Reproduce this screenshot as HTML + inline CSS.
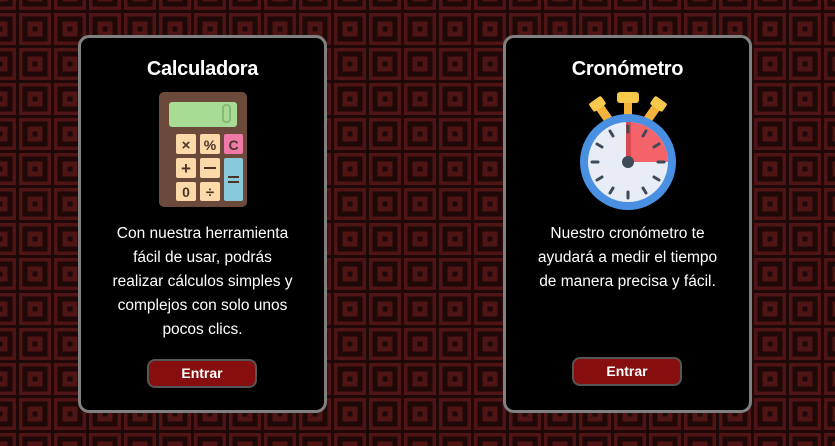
<!DOCTYPE html>
<html><head><meta charset="utf-8"><style>
html,body{margin:0;width:835px;height:446px;overflow:hidden;font-family:"Liberation Sans",sans-serif;}
#bg{position:absolute;left:0;top:0}
.card{position:absolute;top:35px;width:243px;height:372px;background:#000;border:3px solid #808080;border-radius:11px;color:#fff;text-align:center}
.card h2{margin:0;position:absolute;top:20px;left:0;right:0;font-size:20px;font-weight:bold;letter-spacing:-0.3px}
.card p{position:absolute;left:0;right:0;margin:0;font-size:15.5px;line-height:24px;padding:0 30px}
.btn{position:absolute;width:106px;height:25px;background:#860e0e;border:2px solid #555;border-radius:8px;font-weight:bold;font-size:14px;line-height:25px;color:#fff}
svg.i{position:absolute}
</style></head><body>
<svg id="bg" width="835" height="446"><defs><pattern id="p" x="17.5" y="11.5" width="35" height="35" patternUnits="userSpaceOnUse">
<rect width="35" height="35" fill="#1e0808"/><rect x="1.5" y="1.5" width="32" height="32" fill="#4f1515"/><rect x="5" y="5" width="25" height="25" fill="#1e0808"/><rect x="10" y="10" width="15" height="15" fill="#4f1515"/><rect x="15" y="15" width="5" height="5" fill="#1e0808"/></pattern></defs><rect width="835" height="446" fill="url(#p)"/></svg>

<div class="card" style="left:78px">
<h2>Calculadora</h2>
<svg class="i" style="left:77px;top:53px" width="90" height="117" viewBox="0 0 90 117">
<rect x="1" y="1" width="88" height="115" rx="5" fill="#6b4a3c"/>
<rect x="11" y="11" width="68" height="25" rx="3" fill="#a8dc95"/>
<rect x="65" y="14" width="7" height="17" rx="3" fill="none" stroke="#86b878" stroke-width="2"/>
<rect x="18" y="43" width="20" height="20" rx="2" fill="#fcd9a8"/><text x="28" y="59" font-size="15" font-weight="bold" text-anchor="middle" fill="#4a3428">×</text>
<rect x="42" y="43" width="20" height="20" rx="2" fill="#fcd9a8"/><text x="52" y="59" font-size="14" font-weight="bold" text-anchor="middle" fill="#4a3428">%</text>
<rect x="66" y="43" width="19" height="20" rx="2" fill="#f07aa7"/><text x="75.5" y="59" font-size="14" font-weight="bold" text-anchor="middle" fill="#4a3428">C</text>
<rect x="18" y="67" width="20" height="20" rx="2" fill="#fcd9a8"/><text x="28" y="83" font-size="17" font-weight="bold" text-anchor="middle" fill="#4a3428">+</text>
<rect x="42" y="67" width="20" height="20" rx="2" fill="#fcd9a8"/><rect x="46" y="76" width="12" height="2" fill="#4a3428"/>
<rect x="66" y="67" width="19" height="43" rx="2" fill="#89c9dc"/><rect x="70" y="85" width="11" height="2" fill="#4a3428"/><rect x="70" y="90" width="11" height="2" fill="#4a3428"/>
<rect x="18" y="91" width="20" height="19" rx="2" fill="#fcd9a8"/><text x="28" y="106" font-size="14" font-weight="bold" text-anchor="middle" fill="#4a3428">0</text>
<rect x="42" y="91" width="20" height="19" rx="2" fill="#fcd9a8"/><text x="52" y="106" font-size="15" font-weight="bold" text-anchor="middle" fill="#4a3428">÷</text>
</svg>
<p style="top:184px">Con nuestra herramienta fácil de usar, podrás realizar cálculos simples y complejos con solo unos pocos clics.</p>
<div class="btn" style="left:66px;top:321px">Entrar</div>
</div>

<div class="card" style="left:503px">
<h2>Cronómetro</h2>
<svg class="i" style="left:72px;top:53px" width="100" height="122" viewBox="0 0 100 122">
<g transform="rotate(-35 25 20)"><rect x="20" y="12" width="9" height="20" fill="#f5b23a"/><rect x="17" y="6" width="15" height="10" rx="2" fill="#f7c94a"/></g>
<g transform="rotate(35 75 20)"><rect x="71" y="12" width="9" height="20" fill="#f5b23a"/><rect x="68" y="6" width="15" height="10" rx="2" fill="#f7c94a"/></g>
<rect x="46" y="8" width="8" height="20" fill="#f5b23a"/><rect x="39" y="1" width="22" height="11" rx="3" fill="#f7c94a"/>
<circle cx="50" cy="71" r="48" fill="#4a90e2"/>
<circle cx="50" cy="71" r="40" fill="#e8ecf5"/>
<path d="M50 71 V31 A40 40 0 0 1 90 71 Z" fill="#f4636a"/>
<rect x="48" y="31" width="5" height="40" fill="#d94b53"/>
<g stroke="#3e4a58" stroke-width="3" stroke-linecap="round">
<line x1="50" y1="35" x2="50" y2="41"/><line x1="50" y1="101" x2="50" y2="107"/><line x1="14" y1="71" x2="20" y2="71"/><line x1="80" y1="71" x2="86" y2="71"/>
<line x1="32" y1="40" x2="35" y2="45"/><line x1="68" y1="40" x2="65" y2="45"/><line x1="32" y1="102" x2="35" y2="97"/><line x1="68" y1="102" x2="65" y2="97"/>
<line x1="19" y1="53" x2="24" y2="56"/><line x1="81" y1="53" x2="76" y2="56"/><line x1="19" y1="89" x2="24" y2="86"/><line x1="81" y1="89" x2="76" y2="86"/>
</g>
<circle cx="50" cy="71" r="6" fill="#3e4a58"/>
</svg>
<p style="top:184px">Nuestro cronómetro te ayudará a medir el tiempo de manera precisa y fácil.</p>
<div class="btn" style="left:66px;top:319px">Entrar</div>
</div>
</body></html>
